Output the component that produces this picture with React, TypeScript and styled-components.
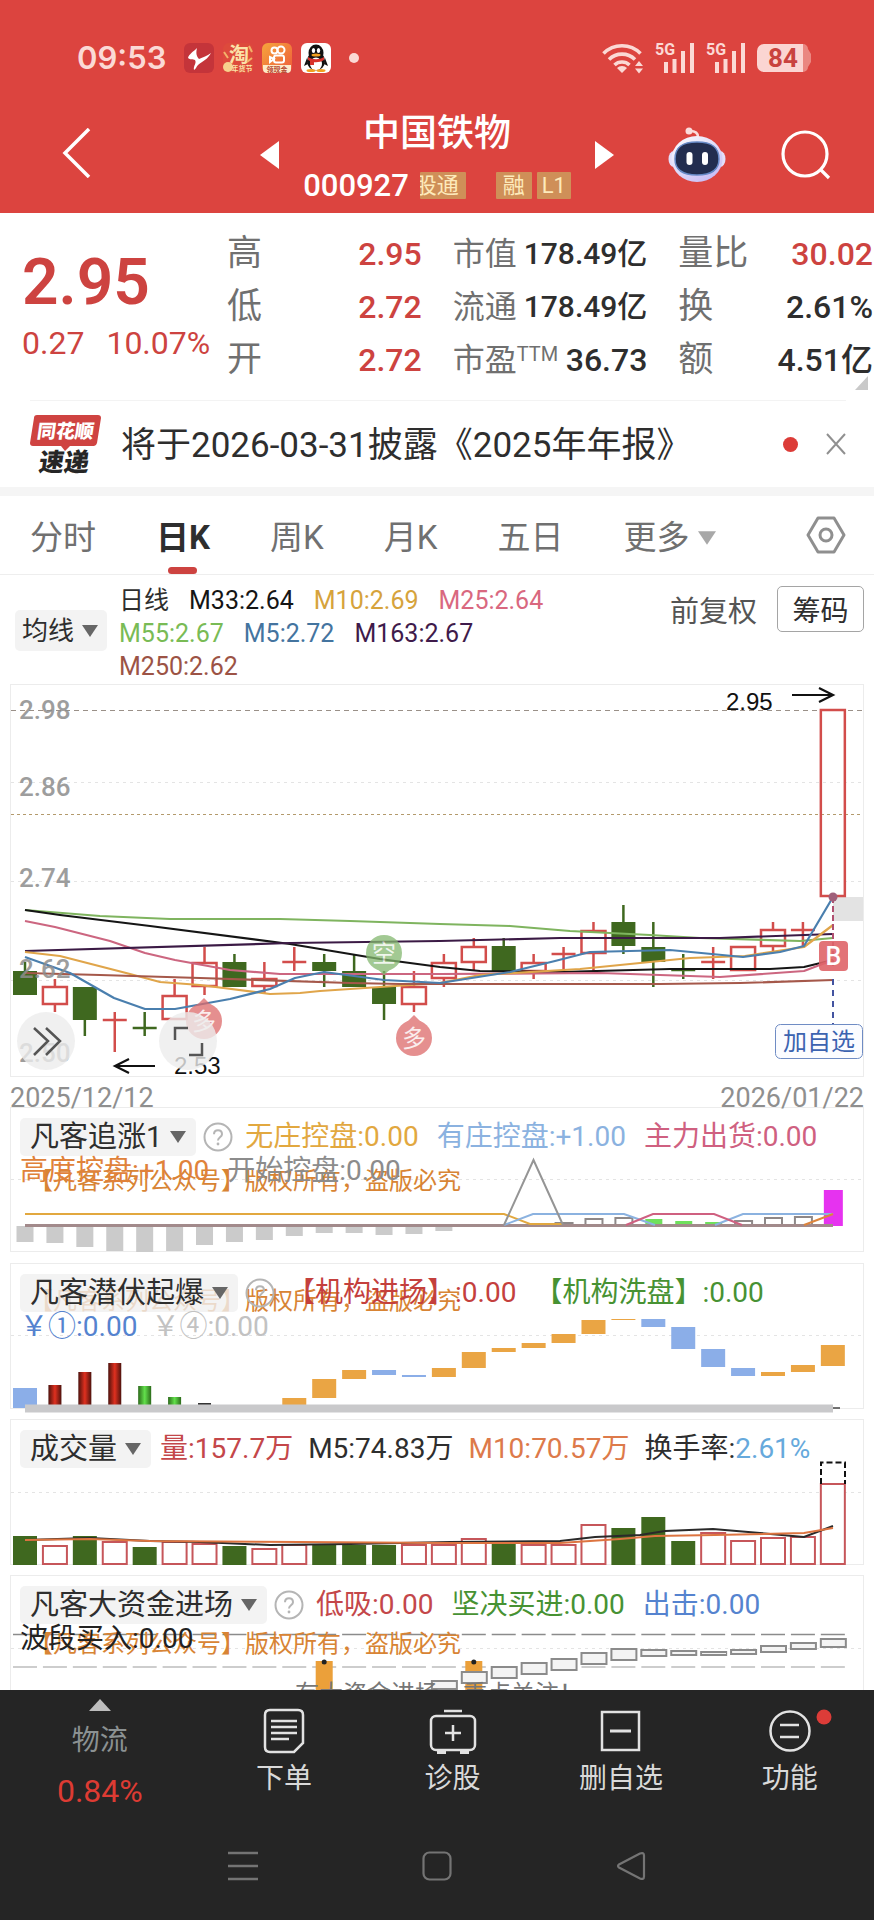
import React from "react";
import styled, { createGlobalStyle } from "styled-components";

const sans = `Roboto, "Noto Sans CJK SC", sans-serif`;

const c = {
  brand: "#dc443f",
  up: "#cd4340",
  candleUp: "#d24d4b",
  down: "#3f681f",
  ink: "#2e2e2e",
  muted: "#707070",
  frame: "#ececec",
  orange: "#e2a83f",
  sky: "#8bb2e0",
  rose: "#cf6080",
};

const Global = createGlobalStyle`
  *, *::before, *::after { box-sizing: border-box; }
  body { margin: 0; background: #fff; font-family: ${sans}; color: ${c.ink}; }
  button { font: inherit; color: inherit; background: none; border: 0; padding: 0; cursor: pointer; }
  svg { display: block; flex: none; }
  h1, p, dl, dd, dt { margin: 0; font-weight: 400; }
`;

const App_ = styled.div`
  display: flex;
  flex-direction: column;
  height: 100vh;
  overflow: hidden;
`;

/* ---------- header ---------- */
const Header = styled.header`
  flex: none;
  background: ${c.brand};
  color: #fff;
  padding-bottom: 9px;
`;
const StatusBar = styled.div`
  display: flex;
  align-items: center;
  justify-content: space-between;
  height: 106px;
  padding: 10px 63px 0 77px;
  color: #fbd9d5;
`;
const StatusGroup = styled.div<{ $gap: number }>`
  display: flex;
  align-items: center;
  gap: ${(p) => p.$gap}px;
`;
const Clock = styled.time`
  font: 600 31px/36px Inter, sans-serif;
  width: 98px;
`;
const TitleBar = styled.div`
  display: grid;
  grid-template-columns: 1fr 354px 1fr;
  align-items: center;
  height: 98px;
`;
const BackSide = styled.div`
  padding-left: 62px;
`;
const ToolSide = styled.div`
  display: flex;
  justify-content: space-between;
  align-items: center;
  padding: 0 43px 0 54px;
`;
const Switcher = styled.div`
  display: flex;
  align-items: center;
  justify-content: space-between;
`;
const Titles = styled.div`
  display: flex;
  flex-direction: column;
  align-items: center;
  gap: 8px;
  padding-top: 4px;
`;
const StockName = styled.h1`
  font-size: 37px;
  font-weight: 500;
  line-height: 48px;
`;
const CodeRow = styled.div`
  display: flex;
  align-items: center;
  height: 38px;
`;
const Code = styled.span`
  font-size: 31px;
  font-weight: 500;
  margin-right: 11px;
`;
const Tag = styled.span<{ $w: number; $after?: number; $clip?: boolean }>`
  display: flex;
  justify-content: ${(p) => (p.$clip ? "flex-end" : "center")};
  width: ${(p) => p.$w}px;
  margin-right: ${(p) => p.$after ?? 0}px;
  padding-right: ${(p) => (p.$clip ? 7 : 0)}px;
  overflow: hidden;
  white-space: nowrap;
  background: #cf8f58;
  color: #fdeabb;
  font-size: 22px;
  line-height: 27px;
  border-radius: 1px;
`;

/* ---------- quote ---------- */
const Quote = styled.section`
  position: relative;
  flex: none;
  display: grid;
  grid-template-columns: 205px 1fr;
  padding: 14px 1px 14px 22px;
`;
const ExpandCorner = styled.svg`
  position: absolute;
  right: 6px;
  bottom: 10px;
`;
const Price = styled.p`
  padding-top: 16px;
  color: ${c.up};
  font-size: 64px;
  font-weight: 600;
  line-height: 80px;
`;
const Change = styled.p`
  display: flex;
  gap: 22px;
  color: ${c.up};
  font-size: 32px;
  line-height: 40px;
`;
const Stats = styled.dl`
  display: grid;
  grid-template-columns: repeat(3, 1fr);
  column-gap: 31px;
`;
const Stat = styled.div`
  display: flex;
  justify-content: space-between;
  align-items: center;
  height: 53px;
  white-space: nowrap;
`;
const StatLabel = styled.dt<{ $big?: boolean }>`
  color: ${c.muted};
  font-size: ${(p) => (p.$big ? 35 : 32)}px;
  line-height: 50px;
  sup {
    font-size: 20px;
    line-height: 20px;
    vertical-align: 10px;
  }
`;
const StatValue = styled.dd<{ $up?: boolean; $small?: boolean }>`
  color: ${(p) => (p.$up ? c.up : c.ink)};
  font-size: ${(p) => (p.$small ? 30 : 32)}px;
  font-weight: 500;
  line-height: 50px;
`;
const Notice = styled.section`
  flex: none;
  display: flex;
  align-items: center;
  height: 87px;
  margin: 0 28px 0 30px;
  border-top: 1px solid #f3f3f3;
`;
const NoticeLink = styled.a`
  flex: 1;
  margin-left: 20px;
  padding-top: 4px;
  color: ${c.ink};
  font-size: 35px;
  line-height: 50px;
  text-decoration: none;
  white-space: nowrap;
`;
const Dot = styled.span<{ $s: number; $c: string }>`
  width: ${(p) => p.$s}px;
  height: ${(p) => p.$s}px;
  border-radius: 50%;
  background: ${(p) => p.$c};
`;
const Close = styled.button`
  margin-left: 28px;
`;

/* ---------- tabs ---------- */
const Tabs = styled.nav`
  flex: none;
  display: flex;
  align-items: center;
  gap: 60px;
  height: 88px;
  padding: 0 28px 0 30px;
  border-top: 9px solid #f5f5f5;
  border-bottom: 1px solid #eeeeee;
`;
const Tab = styled.button<{ $on?: boolean }>`
  display: grid;
  grid-template-rows: 1fr 7px;
  align-items: center;
  justify-items: center;
  height: 78px;
  padding-top: 12px;
  font-size: 33px;
  line-height: 40px;
  font-weight: ${(p) => (p.$on ? 700 : 400)};
  color: ${(p) => (p.$on ? c.ink : "#707070")};
  white-space: nowrap;
  &::after {
    content: "";
    width: 29px;
    height: 7px;
    border-radius: 4px;
    background: ${(p) => (p.$on ? c.up : "transparent")};
  }
`;
const TabText = styled.span`
  display: flex;
  align-items: center;
  gap: 9px;
`;
const Settings = styled.button`
  margin-left: auto;
`;

/* ---------- moving average legend ---------- */
const Legend = styled.section`
  display: flex;
  align-items: flex-start;
  height: 109px;
  padding: 9px 10px 0 15px;
`;
const Picker = styled.button<{ $legend?: boolean }>`
  display: flex;
  align-items: center;
  justify-content: space-between;
  gap: 8px;
  flex: none;
  height: ${(p) => (p.$legend ? 41 : 38)}px;
  margin-top: ${(p) => (p.$legend ? 26 : 0)}px;
  padding: ${(p) => (p.$legend ? "0 9px 0 7px" : "0 10px")};
  border-radius: 5px;
  background: rgba(240, 240, 240, 0.8);
  color: ${c.ink};
  font-size: ${(p) => (p.$legend ? 26 : 29)}px;
  line-height: 36px;
  white-space: nowrap;
`;
const Averages = styled.div`
  flex: 1;
  display: flex;
  flex-wrap: wrap;
  column-gap: 20px;
  margin-left: 12px;
  max-width: 460px;
  font-size: 25px;
  line-height: 33px;
`;
const Tint = styled.span<{ $c: string }>`
  color: ${(p) => p.$c};
  white-space: nowrap;
`;
const LegendTools = styled.div`
  display: flex;
  align-items: center;
  gap: 20px;
  margin: 2px 0 0 auto;
`;
const Adjust = styled.button`
  color: #555;
  font-size: 29px;
`;
const Chips = styled.button`
  width: 87px;
  height: 46px;
  border: 1px solid #a5a5a5;
  border-radius: 5px;
  font-size: 28px;
`;

/* ---------- chart panels ---------- */
const Charts = styled.main`
  flex: 1;
  min-height: 0;
  overflow: hidden;
`;
const Panel = styled.section<{ $gap?: number }>`
  display: grid;
  margin: 0 10px ${(p) => p.$gap ?? 0}px;
  border: 1px solid ${c.frame};
  > * {
    grid-area: 1 / 1;
  }
`;
const Plot = styled.svg`
  width: 100%;
  height: auto;
  overflow: visible;
  font-family: ${sans};
`;
const PanelHead = styled.div`
  z-index: 1;
  align-self: start;
  padding: 10px 9px 0;
  font-size: 28px;
  line-height: 34px;
`;
const HeadRow = styled.div<{ $gap?: number; $second?: boolean }>`
  display: flex;
  align-items: center;
  gap: ${(p) => p.$gap ?? 18}px;
  height: ${(p) => (p.$second ? 30 : 38)}px;
  white-space: nowrap;
`;
const PickerGroup = styled.div`
  display: flex;
  align-items: center;
  gap: 7px;
  margin-right: -6px;
`;
const Dates = styled.div`
  display: flex;
  justify-content: space-between;
  margin: 0 10px;
  padding-top: 5px;
  height: 30px;
  color: #8f8f8f;
  font-size: 27px;
  line-height: 32px;
`;

/* ---------- bottom ---------- */
const Bottom = styled.footer`
  flex: none;
  background: #252525;
  color: #d9d9d9;
`;
const Actions = styled.nav`
  display: grid;
  grid-template-columns: 45fr repeat(4, 38fr);
  height: 122px;
`;
const Action = styled.button`
  display: flex;
  flex-direction: column;
  align-items: center;
  padding-top: 18px;
  font-size: 28px;
  line-height: 40px;
  gap: 5px;
`;
const Sector = styled.button`
  display: flex;
  flex-direction: column;
  align-items: center;
  padding-top: 9px;
  color: #8b9192;
  font-size: 28px;
  line-height: 50px;
  b {
    color: #dd3b33;
    font-size: 32px;
    font-weight: 400;
  }
  span {
    margin-top: 5px;
  }
`;
const System = styled.nav`
  display: grid;
  grid-template-columns: repeat(3, 1fr);
  justify-items: center;
  align-items: center;
  height: 108px;
  padding: 0 146px;
`;

/* ---------- data ---------- */
const X = (i: number) => 25 + i * 29.92;

type Candle = [up: boolean, top: number, bottom: number, high: number, low: number];
const candles: Candle[] = [
  [false, 972, 996, 963, 996], [true, 987, 1006, 980, 1013], [false, 988, 1021, 988, 1037], [true, 1021, 1021, 1013, 1053],
  [false, 1029, 1029, 1013, 1037], [true, 996, 1021, 980, 1021], [true, 963, 988, 948, 996], [false, 963, 988, 955, 988],
  [true, 979, 988, 963, 994], [true, 963, 963, 948, 972], [false, 963, 972, 955, 988], [false, 972, 988, 955, 988],
  [false, 988, 1005, 972, 1021], [true, 987, 1006, 972, 1013], [true, 963, 980, 955, 988], [true, 947, 964, 939, 972],
  [false, 947, 972, 939, 972], [true, 963, 973, 955, 980], [true, 955, 955, 948, 972], [true, 931, 955, 923, 972],
  [false, 923, 947, 906, 955], [false, 948, 963, 923, 988], [false, 971, 971, 955, 980], [true, 963, 963, 948, 980],
  [true, 947, 972, 947, 972], [true, 930, 948, 923, 953], [true, 931, 931, 923, 947], [true, 710, 898, 710, 898],
];

const averages: [color: string, points: string][] = [
  ["#7fb45f", "25,911 100,917 170,920 280,920 350,922 440,925 510,927 570,932 650,936 700,939 800,942 833,939"],
  ["#151515", "25,911 60,916 150,927 290,945 380,960 440,968 480,972 560,973 670,970 770,970 804,968 833,961"],
  ["#cc6680", "25,922 55,928 110,942 145,954 175,961 230,971 280,975 440,975 600,974 720,978 804,972 833,961"],
  ["#3b1a45", "25,952 290,944 440,942 560,939 720,939 833,935"],
  ["#e0a54a", "25,953 60,957 130,975 160,983 200,986 270,995 300,994 320,992 440,984 480,976 580,970 690,959 745,957 804,948 833,926"],
  ["#a5584a", "25,974 100,976 200,979 350,984 400,985 560,985 660,985 740,984 833,981"],
  ["#4a7fae", "25,958 70,974 114,999 145,1010 175,1010 230,1000 270,990 295,979 324,973 384,981 440,984 510,973 555,962 590,953 670,951 743,958 780,953 804,947 833,898"],
];

const legend: [string, string][] = [
  [c.ink, "日线"], ["#151515", "M33:2.64"], ["#d6a33c", "M10:2.69"], ["#d9687f", "M25:2.64"],
  ["#79bb55", "M55:2.67"], ["#44749f", "M5:2.72"], ["#3f1b4b", "M163:2.67"], ["#9c5345", "M250:2.62"],
];

const stats: { label: React.ReactNode; value: string; up?: boolean; small?: boolean; big?: boolean }[] = [
  { label: "高", value: "2.95", up: true, big: true },
  { label: "市值", value: "178.49亿", small: true },
  { label: "量比", value: "30.02", up: true, big: true },
  { label: "低", value: "2.72", up: true, big: true },
  { label: "流通", value: "178.49亿", small: true },
  { label: "换", value: "2.61%", big: true },
  { label: "开", value: "2.72", up: true, big: true },
  { label: <>市盈<sup>TTM</sup></>, value: "36.73" },
  { label: "额", value: "4.51亿", big: true },
];

const greyDepths = [1243, 1244, 1248, 1252, 1253, 1252, 1246, 1243, 1241, 1237, 1234, 1234, 1236, 1235, 1232];

const steps: [i: number, top: number, bottom: number, up: boolean][] = [
  [0, 1389, 1409, false], [9, 1399, 1406, true], [10, 1380, 1399, true], [11, 1371, 1380, true], [12, 1371, 1376, false],
  [13, 1376, 1378, false], [14, 1369, 1378, true], [15, 1353, 1369, true], [16, 1349, 1353, true], [17, 1344, 1349, true],
  [18, 1335, 1344, true], [19, 1321, 1335, true], [20, 1320, 1321, true], [21, 1320, 1328, false], [22, 1328, 1350, false],
  [23, 1350, 1368, false], [24, 1369, 1377, false], [25, 1373, 1377, true], [26, 1366, 1373, true], [27, 1346, 1367, true],
];
const tubes: [i: number, top: number, fill: string][] = [
  [1, 1386, "url(#red)"], [2, 1373, "url(#red)"], [3, 1364, "url(#red)"],
  [4, 1387, "url(#green)"], [5, 1398, "url(#green)"], [6, 1404, "#333"],
];

const volumes: [top: number, up: boolean][] = [
  [1537, false], [1547, true], [1537, false], [1543, true], [1548, false], [1543, true], [1545, true], [1547, false],
  [1550, true], [1546, true], [1546, false], [1546, false], [1546, false], [1546, true], [1546, true], [1540, true],
  [1545, false], [1546, true], [1546, true], [1526, true], [1529, false], [1518, false], [1542, false], [1534, true],
  [1542, true], [1539, true], [1538, true], [1485, true],
];

const funds: [i: number, top: number, bottom: number][] = [
  [14, 1682, 1690], [15, 1673, 1684], [16, 1668, 1679], [17, 1664, 1675], [18, 1660, 1671], [19, 1654, 1665], [20, 1650, 1661],
  [21, 1651, 1657], [22, 1652, 1656], [23, 1653, 1656], [24, 1651, 1655], [25, 1647, 1653], [26, 1644, 1650], [27, 1640, 1648],
];

/* ---------- small drawings ---------- */
const Caret = ({ fill = "#666", w = 16 }: { fill?: string; w?: number }) => (
  <svg width={w} height={w - 4} viewBox="0 0 16 12"><path d="M0 0h16L8 12z" fill={fill} /></svg>
);

const Help = () => (
  <svg width="30" height="30" viewBox="0 0 30 30" aria-label="说明">
    <circle cx="15" cy="15" r="13.5" fill="none" stroke="#b5b5b5" strokeWidth="2" />
    <path d="M11 12.2c0-5.2 8-5.2 8 0 0 3-4 3.300-4 6.300" fill="none" stroke="#b5b5b5" strokeWidth="2" />
    <circle cx="15" cy="22" r="1.400" fill="#b5b5b5" />
  </svg>
);

const Wifi = () => (
  <svg width="42" height="31" viewBox="0 0 42 31" fill="none" stroke="#fbd9d5" strokeWidth="3.600">
    <path d="M1.500 10.500a26 26 0 0 1 37 0" />
    <path d="M7 16.500a18.500 18.500 0 0 1 26 0" />
    <path d="M12.500 22a11 11 0 0 1 15 0" />
    <path d="M15 25a7 7 0 0 1 10 0l-5 5z" fill="#fbd9d5" stroke="none" />
    <path d="M33 23l4-5 4 5zM33 25.500l4 5 4-5z" fill="#fbd9d5" stroke="none" />
  </svg>
);

const Signal = () => (
  <svg width="40" height="32" viewBox="0 0 40 32" overflow="visible" fill="#fbd9d5">
    <text x="0" y="13" fontSize="16" fontWeight="700" fontFamily="Roboto, sans-serif">5G</text>
    <rect x="9" y="20" width="4" height="11" /><rect x="17.500" y="17" width="4" height="14" />
    <rect x="26" y="9" width="4" height="22" /><rect x="35" y="1" width="4" height="30" />
  </svg>
);

const Battery = () => (
  <svg width="54" height="30" viewBox="0 0 54 30">
    <path d="M7 1h39a5 5 0 0 1 5 5l3 5v8l-3 5a5 5 0 0 1-5 5z" fill="#ea8781" />
    <path d="M7 1h39v28H7a7 7 0 0 1-7-7V8a7 7 0 0 1 7-7z" fill="#fbd5d2" />
    <text x="26" y="24" textAnchor="middle" fontSize="26" fontWeight="700" fontFamily="Roboto, sans-serif" fill="#c9423e">84</text>
  </svg>
);

const AppIcons = () => (
  <>
    <svg width="30" height="30" viewBox="0 0 30 30">
      <rect width="30" height="30" rx="6" fill="#c4343a" />
      <path d="M13 5c-4 4-8 6-9 10 2 2 5 1 7 2 2 3-2 6-1 10 2-1 2-3 4-5 5-4 10-6 13-12-4 3-8 4-12 6-3-3-3-7-2-11z" fill="#fff" />
    </svg>
    <svg width="30" height="30" viewBox="0 0 30 30">
      <rect width="30" height="30" rx="6" fill="#dd4a3c" />
      <text x="16" y="19" textAnchor="middle" fontSize="20" fontWeight="700" fontFamily={sans} fill="#fbe2a8">淘</text>
      <path d="M1 9l4 6M26 3l3 6M24 19l5-4" stroke="#f3b26a" strokeWidth="2" />
      <circle cx="5" cy="24" r="5" fill="#f7d28d" />
      <text x="19" y="28" textAnchor="middle" fontSize="7" fontWeight="700" fontFamily={sans} fill="#fbe2a8">年货节</text>
    </svg>
    <svg width="30" height="30" viewBox="0 0 30 30">
      <defs><linearGradient id="ks" x1="0" y1="0" x2="1" y2="1"><stop offset="0" stopColor="#f6a63c" /><stop offset="1" stopColor="#ee5a3a" /></linearGradient></defs>
      <rect width="30" height="30" rx="6" fill="url(#ks)" />
      <g fill="none" stroke="#fff" strokeWidth="2"><circle cx="12.500" cy="7.500" r="3" /><circle cx="19" cy="7" r="3.500" /><rect x="12" y="12.500" width="10" height="7" rx="2" /><path d="M12 16l-4-2v5z" /></g>
      <path d="M1 22h28v4a4 4 0 0 1-4 4H5a4 4 0 0 1-4-4z" fill="#fdeac8" />
      <text x="15" y="29" textAnchor="middle" fontSize="7" fontWeight="700" fontFamily={sans} fill="#b5472f">领现金</text>
    </svg>
    <svg width="30" height="30" viewBox="0 0 30 30">
      <rect width="30" height="30" rx="6" fill="#fff" />
      <ellipse cx="15" cy="18" rx="9" ry="9.500" fill="#111" /><ellipse cx="15" cy="10" rx="7.500" ry="8.500" fill="#111" />
      <path d="M6 15l-3 8 4-2zM24 15l3 8-4-2z" fill="#111" />
      <ellipse cx="15" cy="21" rx="6" ry="6.500" fill="#fff" />
      <ellipse cx="12.500" cy="7.500" rx="1.700" ry="2.500" fill="#fff" /><ellipse cx="17.500" cy="7.500" rx="1.700" ry="2.500" fill="#fff" />
      <ellipse cx="15" cy="12" rx="4.500" ry="1.500" fill="#f0a020" />
      <path d="M7 14c5 3 11 3 16 0v3c-5 3-11 3-16 0zM9 17h4v5H9z" fill="#d8332c" />
      <ellipse cx="10" cy="27.500" rx="4.500" ry="1.500" fill="#f0a020" /><ellipse cx="20" cy="27.500" rx="4.500" ry="1.500" fill="#f0a020" />
    </svg>
  </>
);

const Robot = () => (
  <svg width="58" height="56" viewBox="0 0 58 56">
    <defs><linearGradient id="shell" x1="0" y1="0" x2="0.700" y2="1"><stop offset="0" stopColor="#fff" /><stop offset="0.600" stopColor="#dcd8f8" /><stop offset="1" stopColor="#c9bdf5" /></linearGradient></defs>
    <path d="M30 10c0-4-2-6-8-6" fill="none" stroke="#fbdcdc" strokeWidth="2.500" /><circle cx="21" cy="4" r="3.500" fill="#fbdcdc" />
    <ellipse cx="6" cy="32" rx="5.500" ry="8" fill="#e3defa" /><ellipse cx="52" cy="32" rx="5.500" ry="8" fill="#e3defa" />
    <ellipse cx="29" cy="32" rx="25.500" ry="23" fill="url(#shell)" />
    <path d="M29 15c16 0 22 6 22 17s-7 16-22 16S7 43 7 32s6-17 22-17z" fill="#222d4f" stroke="#6689c6" strokeWidth="1.500" />
    <rect x="18.500" y="25" width="6" height="13" rx="3" fill="#fff" /><rect x="34" y="25" width="6" height="13" rx="3" fill="#fff" />
  </svg>
);

const ExpressLogo = () => (
  <svg width="71" height="60" viewBox="0 0 71 60" overflow="visible" role="img" aria-label="同花顺速递">
    <path d="M7 1h61a3 3 0 0 1 3 3l-4 25a4 4 0 0 1-3 3H40l-5 5-4-5H3a3 3 0 0 1-3-3L4 4a3 3 0 0 1 3-3z" fill="#cf4341" />
    <g transform="skewX(-8)" fontFamily={sans} fontWeight="900" textAnchor="middle">
      <text x="38" y="24" fontSize="19" fill="#fff">同花顺</text>
      <text x="41" y="57" fontSize="25" fill="#262626">速递</text>
    </g>
  </svg>
);

const Mark = ({ x, y, text, color, below }: { x: number; y: number; text: string; color: string; below?: boolean }) => (
  <g opacity="0.75">
    <circle cx={x} cy={y} r="18" fill={color} />
    <path d={below ? `M${x - 9} ${y + 14}L${x} ${y + 22}l9-8z` : `M${x - 9} ${y - 14}L${x} ${y - 23}l9 9z`} fill={color} />
    <text x={x} y={y + 9} fontSize="24" textAnchor="middle" fill="#fff" fillOpacity="0.85">{text}</text>
  </g>
);

const Grid = ({ y, color = "#e4e4e4", dash = "3 4" }: { y: number; color?: string; dash?: string }) => (
  <line x1="11" x2="863" y1={y} y2={y} stroke={color} strokeDasharray={dash} />
);

const Watermark = ({ y }: { y: number }) => (
  <text x="29" y={y} fontSize="24" fill="#d88434">【凡客系列公众号】版权所有，盗版必究</text>
);

/* ---------- charts ---------- */
const CandlePlot = () => (
  <Plot viewBox="11 686 852 391" role="img" aria-label="日K线图">
    <Grid y={711.5} color="#9a9088" dash="5 4" />
    <Grid y={783.5} /><Grid y={882.5} /><Grid y={981.5} />
    <Grid y={815.5} color="#b39a6c" dash="3 3" />
    <rect x="833" y="898" width="30" height="24" fill="#e3e3e3" />
    {candles.map(([up, top, bottom, high, low], i) => {
      const x = X(i);
      const color = up ? c.candleUp : c.down;
      const flat = top === bottom;
      return (
        <g key={i} stroke={color} strokeWidth="2.500" fill="none">
          {high < top && <path d={`M${x} ${high}V${top}`} />}
          {low > bottom && <path d={`M${x} ${bottom}V${low}`} />}
          {flat ? <path d={`M${x - 12} ${top}h24`} /> : up
            ? <rect x={x - 12} y={top + 1} width="24" height={bottom - top - 2} />
            : <rect x={x - 12} y={top} width="24" height={bottom - top} fill={color} stroke="none" />}
        </g>
      );
    })}
    {averages.map(([color, points]) => <polyline key={color} points={points} fill="none" stroke={color} strokeWidth="2.200" strokeLinejoin="round" />)}
    <g fontSize="26" fontWeight="500" fill="#8d8d8d" opacity="0.85">
      <text x="19" y="720">2.98</text><text x="19" y="797">2.86</text><text x="19" y="888">2.74</text>
      <text x="19" y="979">2.62</text><text x="19" y="1063">2.50</text>
    </g>
    <Mark x={384} y={954} text="空" color="#83b86f" below />
    <Mark x={414} y={1039} text="多" color="#dd6a6a" />
    <Mark x={204} y={1022} text="多" color="#dd6a6a" />
    <g fontFamily="'Liberation Sans', sans-serif" fontSize="24" fill="#111">
      <text x="726" y="711">2.95</text><text x="174" y="1075">2.53</text>
    </g>
    <path d="M792 696h40M819 689l14 7-14 7M155 1067h-40M129 1060l-14 7 14 7" fill="none" stroke="#111" strokeWidth="2.200" />
    <g fill="#ececec" fillOpacity="0.8"><circle cx="46" cy="1042" r="29" /><circle cx="188" cy="1042" r="29" /></g>
    <path d="M34 1029l14 13-14 14M46 1029l14 13-14 14M175 1041v-12h13M202 1044v12h-13" fill="none" stroke="#555" strokeWidth="2.500" />
    <path d="M833 898v70" stroke="#b05070" strokeWidth="2" strokeDasharray="6 3" />
    <circle cx="833" cy="898" r="4.500" fill="#a0607a" />
    <path d="M833 980v45" stroke="#4353a0" strokeWidth="2" strokeDasharray="6 5" />
    <rect x="819" y="942" width="29" height="30" rx="4" fill="#df6468" fillOpacity="0.9" />
    <text x="833.500" y="966" fontSize="25" fontWeight="500" textAnchor="middle" fill="#fff">B</text>
    <rect x="775.500" y="1025.500" width="87" height="34" rx="5" fill="#fbfcff" stroke="#6f8cc4" />
    <text x="819" y="1051" fontSize="24" textAnchor="middle" fill="#3c63b0">加自选</text>
  </Plot>
);

const ChasePlot = () => (
  <Plot viewBox="11 1109 852 143" role="img" aria-label="凡客追涨1">
    <Grid y={1180.5} />
    <Watermark y={1190} />
    {greyDepths.map((y, i) => <rect key={i} x={X(i) - 8.5} y="1227" width="17" height={y - 1227} fill="#cbcbcb" />)}
    <g fill="#6fe05c"><rect x={X(21) - 8} y="1220" width="17" height="6" /><rect x={X(22) - 8} y="1222" width="17" height="4" /><rect x={X(23) - 8} y="1223" width="17" height="3" /></g>
    <g fill="none" stroke="#8e8888" strokeWidth="2">
      {([[18, 1224], [19, 1220], [20, 1219], [24, 1222], [25, 1219], [26, 1218]] as const).map(([i, y]) => (
        <rect key={i} x={X(i) - 8} y={y} width="17" height={1227 - y} />
      ))}
    </g>
    <rect x={X(27) - 9} y="1191" width="19" height="36" fill="#e632f0" />
    <g fill="none" strokeWidth="2">
      <path d="M25 1226.500H833" stroke="#a28a8b" strokeWidth="3" />
      <path d="M25 1215H504L530 1225H563" stroke={c.orange} />
      <path d="M504 1226L533 1215H624L655 1226M715 1226L743 1215H833" stroke={c.sky} />
      <path d="M626 1226L653 1215H714L742 1226" stroke={c.rose} />
      <path d="M804 1226L833 1215" stroke="#dd843c" />
      <path d="M504 1226L533.500 1161L563 1226" stroke="#959595" />
    </g>
  </Plot>
);

const LatentPlot = () => (
  <Plot viewBox="11 1265 852 144" role="img" aria-label="凡客潜伏起爆">
    <defs>
      <linearGradient id="red"><stop offset="0" stopColor="#4d120d" /><stop offset="0.500" stopColor="#e0301f" /><stop offset="1" stopColor="#4d120d" /></linearGradient>
      <linearGradient id="green"><stop offset="0" stopColor="#2c6a1a" /><stop offset="0.500" stopColor="#62e04c" /><stop offset="1" stopColor="#2c6a1a" /></linearGradient>
    </defs>
    <Grid y={1336.5} />
    <Watermark y={1310} />
    {steps.map(([i, top, bottom, up]) => <rect key={i} x={X(i) - 12} y={top} width="24" height={bottom - top} fill={up ? "#eaa544" : "#8baee8"} />)}
    {tubes.map(([i, top, fill]) => <rect key={i} x={X(i) - 6.500} y={top} width="13" height={1406 - top} fill={fill} />)}
    <path d="M25 1409.500H833" stroke="#c9c9cb" strokeWidth="8" />
    <path d="M833 1409h7" stroke="#444" strokeWidth="1.500" />
  </Plot>
);

const VolumePlot = () => (
  <Plot viewBox="11 1421 852 144" role="img" aria-label="成交量">
    <Grid y={1493.5} />
    {volumes.map(([top, up], i) => up
      ? <rect key={i} x={X(i) - 12} y={top} width="24" height={1565 - top} fill="#fff" stroke="#c6565a" strokeWidth="2" />
      : <rect key={i} x={X(i) - 12} y={top} width="24" height={1566 - top} fill={c.down} />)}
    <path d="M821 1485v-21.500h24V1485" fill="none" stroke="#111" strokeWidth="2" strokeDasharray="6 3" />
    <g fill="none" strokeWidth="2">
      <polyline stroke="#2a2a2a" points="25,1541 90,1539 150,1542 200,1543 270,1546 350,1545 450,1543 560,1542 595,1538 640,1536 665,1532 713,1530 760,1534 804,1538 833,1527" />
      <polyline stroke="#dd7440" points="25,1541 90,1540 150,1542 300,1543 450,1544 560,1544 620,1540 655,1537 715,1536 804,1534 833,1529" />
    </g>
  </Plot>
);

const FundsPlot = () => (
  <Plot viewBox="11 1577 852 144" role="img" aria-label="凡客大资金进场">
    <Grid y={1649.5} />
    <path d="M13 1635.500H846" stroke="#8b8b8b" strokeWidth="1.500" strokeDasharray="24 5.920" />
    <path d="M13 1668H846" stroke="#bdbdbd" strokeWidth="1.500" strokeDasharray="24 5.920" />
    <Watermark y={1653} />
    <g fill="#eba03a"><rect x={X(10) - 8.5} y="1662" width="17" height="60" /><rect x={X(15) - 8.500} y="1662" width="17" height="60" /></g>
    <circle cx={X(10)} cy="1663" r="2.500" fill="#222" /><circle cx={X(15)} cy="1663" r="2.500" fill="#222" />
    {funds.map(([i, top, bottom]) => (
      <rect key={i} x={X(i) - 12} y={top} width="25" height={bottom - top} fill="#f4f4f4" stroke="#8b8b8b" strokeWidth="2" />
    ))}
    <text x="295" y="1703" fontSize="24" fill="#777">有大资金进场，重点关注！</text>
  </Plot>
);

const PanelPicker = ({ name, help = true }: { name: string; help?: boolean }) => (
  <PickerGroup>
    <Picker>{name}<Caret /></Picker>
    {help && <Help />}
  </PickerGroup>
);

const line = { fill: "none", stroke: "#e2e2e2", strokeWidth: 2.5 } as const;

export default function App() {
  return (
    <App_>
      <Global />
      <Header>
        <StatusBar>
          <StatusGroup $gap={9}>
            <Clock>09:53</Clock>
            <AppIcons />
            <svg width="30" height="10" viewBox="0 0 30 10"><circle cx="14" cy="5" r="5" fill="#fbd9d5" /></svg>
          </StatusGroup>
          <StatusGroup $gap={11}><Wifi /><Signal /><Signal /><Battery /></StatusGroup>
        </StatusBar>
        <TitleBar>
          <BackSide>
            <button aria-label="返回">
              <svg width="29" height="50" viewBox="0 0 29 50"><path d="M27 1L3 25l24 24" fill="none" stroke="#fff" strokeWidth="3.500" /></svg>
            </button>
          </BackSide>
          <Switcher>
            <button aria-label="上一只"><svg width="19" height="28" viewBox="0 0 19 28"><path d="M19 0v28L0 14z" fill="#fff" /></svg></button>
            <Titles>
              <StockName>中国铁物</StockName>
              <CodeRow>
                <Code>000927</Code>
                <Tag $w={46} $after={30} $clip>股通</Tag>
                <Tag $w={36} $after={5}>融</Tag>
                <Tag $w={34}>L1</Tag>
              </CodeRow>
            </Titles>
            <button aria-label="下一只"><svg width="19" height="28" viewBox="0 0 19 28"><path d="M0 0v28l19-14z" fill="#fff" /></svg></button>
          </Switcher>
          <ToolSide>
            <button aria-label="智能助手"><Robot /></button>
            <button aria-label="搜索">
              <svg width="50" height="50" viewBox="0 0 50 50" fill="none" stroke="#fff" strokeWidth="3.200"><circle cx="24" cy="24" r="22" /><path d="M39 39l9 9" /></svg>
            </button>
          </ToolSide>
        </TitleBar>
      </Header>

      <Quote>
        <div>
          <Price>2.95</Price>
          <Change><span>0.27</span><span>10.07%</span></Change>
        </div>
        <Stats>
          {stats.map((s, i) => (
            <Stat key={i}>
              <StatLabel $big={s.big}>{s.label}</StatLabel>
              <StatValue $up={s.up} $small={s.small}>{s.value}</StatValue>
            </Stat>
          ))}
        </Stats>
        <ExpandCorner width="13" height="14" viewBox="0 0 13 14"><path d="M13 0v14H0z" fill="#c9c9c9" /></ExpandCorner>
      </Quote>

      <Notice>
        <ExpressLogo />
        <NoticeLink href="#notice">将于2026-03-31披露《2025年年报》</NoticeLink>
        <Dot $s={15} $c="#dc3c38" />
        <Close aria-label="关闭"><svg width="20" height="22" viewBox="0 0 20 22"><path d="M1 1l18 20M19 1L1 21" stroke="#909090" strokeWidth="2" /></svg></Close>
      </Notice>

      <Tabs>
        {["分时", "日K", "周K", "月K", "五日"].map((t) => <Tab key={t} $on={t === "日K"}>{t}</Tab>)}
        <Tab><TabText>更多<Caret fill="#a8a8a8" w={18} /></TabText></Tab>
        <Settings aria-label="设置">
          <svg width="40" height="38" viewBox="0 0 40 38" fill="none" stroke="#8f8f8f" strokeWidth="3"><path d="M12 2h16l10 17-10 17H12L2 19z" strokeLinejoin="round" /><circle cx="20" cy="19" r="6" /></svg>
        </Settings>
      </Tabs>

      <Charts>
        <Legend>
          <Picker $legend>均线<Caret /></Picker>
          <Averages>{legend.map(([color, text]) => <Tint key={text} $c={color}>{text}</Tint>)}</Averages>
          <LegendTools><Adjust>前复权</Adjust><Chips>筹码</Chips></LegendTools>
        </Legend>

        <Panel><CandlePlot /></Panel>
        <Dates><time>2025/12/12</time><time>2026/01/22</time></Dates>

        <Panel $gap={11}>
          <ChasePlot />
          <PanelHead>
            <HeadRow>
              <PanelPicker name="凡客追涨1" />
              <Tint $c={c.orange}>无庄控盘:0.00</Tint><Tint $c={c.sky}>有庄控盘:+1.00</Tint><Tint $c={c.rose}>主力出货:0.00</Tint>
            </HeadRow>
            <HeadRow $second><Tint $c="#e0823a">高度控盘:+1.00</Tint><Tint $c="#8c8c8c">开始控盘:0.00</Tint></HeadRow>
          </PanelHead>
        </Panel>

        <Panel $gap={10}>
          <LatentPlot />
          <PanelHead>
            <HeadRow>
              <PanelPicker name="凡客潜伏起爆" />
              <Tint $c="#c4403d">【机构进场】:0.00</Tint><Tint $c="#479233">【机构洗盘】:0.00</Tint>
            </HeadRow>
            <HeadRow $second $gap={14}><Tint $c="#5583cf">￥①:0.00</Tint><Tint $c="#c2c2c2">￥④:0.00</Tint></HeadRow>
          </PanelHead>
        </Panel>

        <Panel $gap={10}>
          <VolumePlot />
          <PanelHead>
            <HeadRow $gap={15}>
              <PanelPicker name="成交量" help={false} />
              <Tint $c="#c4474a">量:157.7万</Tint><Tint $c={c.ink}>M5:74.83万</Tint><Tint $c="#dd7a4a">M10:70.57万</Tint>
              <Tint $c={c.ink}>换手率:<Tint $c="#66a9dc">2.61%</Tint></Tint>
            </HeadRow>
          </PanelHead>
        </Panel>

        <Panel>
          <FundsPlot />
          <PanelHead>
            <HeadRow>
              <PanelPicker name="凡客大资金进场" />
              <Tint $c="#c4474a">低吸:0.00</Tint><Tint $c="#479233">坚决买进:0.00</Tint><Tint $c="#5583cf">出击:0.00</Tint>
            </HeadRow>
            <HeadRow $second><Tint $c="#222">波段买入:0.00</Tint></HeadRow>
          </PanelHead>
        </Panel>
      </Charts>

      <Bottom>
        <Actions>
          <Sector>
            <svg width="22" height="12" viewBox="0 0 22 12"><path d="M0 12L11 0l11 12z" fill="#bdbdbd" /></svg>
            <span>物流</span>
            <b>0.84%</b>
          </Sector>
          <Action>
            <svg width="42" height="46" viewBox="0 0 42 46" {...line}><path d="M7 2h28q5 0 5 5v28l-9 9H7q-5 0-5-5V7q0-5 5-5zM8 13h26M8 19h26M8 25h26M8 31h18" /></svg>
            下单
          </Action>
          <Action>
            <svg width="48" height="46" viewBox="0 0 48 46" {...line}><rect x="2" y="8" width="44" height="34" rx="5" /><path d="M15 3h18M24 17v16M16 25h16" /><path d="M8 44h9M31 44h9" strokeWidth="4" /></svg>
            诊股
          </Action>
          <Action>
            <svg width="42" height="46" viewBox="0 0 42 46" {...line}><rect x="2" y="4" width="37" height="38" /><path d="M10 23h21" strokeWidth="3" /></svg>
            删自选
          </Action>
          <Action>
            <svg width="42" height="46" viewBox="0 0 42 46" overflow="visible" {...line}><circle cx="21" cy="23" r="19.500" /><path d="M11 17h19M11 29h19" /><circle cx="55" cy="9" r="7.500" fill="#dc3c38" stroke="none" /></svg>
            功能
          </Action>
        </Actions>
        <System>
          <button aria-label="最近任务"><svg width="30" height="30" viewBox="0 0 30 30"><path d="M0 2h30M0 15h30M0 28h30" stroke="#747474" strokeWidth="2.500" /></svg></button>
          <button aria-label="主屏幕"><svg width="30" height="30" viewBox="0 0 30 30"><rect x="1.500" y="1.500" width="27" height="27" rx="6" fill="none" stroke="#747474" strokeWidth="2.200" /></svg></button>
          <button aria-label="后退"><svg width="30" height="30" viewBox="0 0 30 30"><path d="M24 2.500L3 13.500q-2 1.500 0 3L24 27.500q4 1.500 4-2V4.500q0-3.500-4-2z" fill="none" stroke="#747474" strokeWidth="2.200" /></svg></button>
        </System>
      </Bottom>
    </App_>
  );
}
